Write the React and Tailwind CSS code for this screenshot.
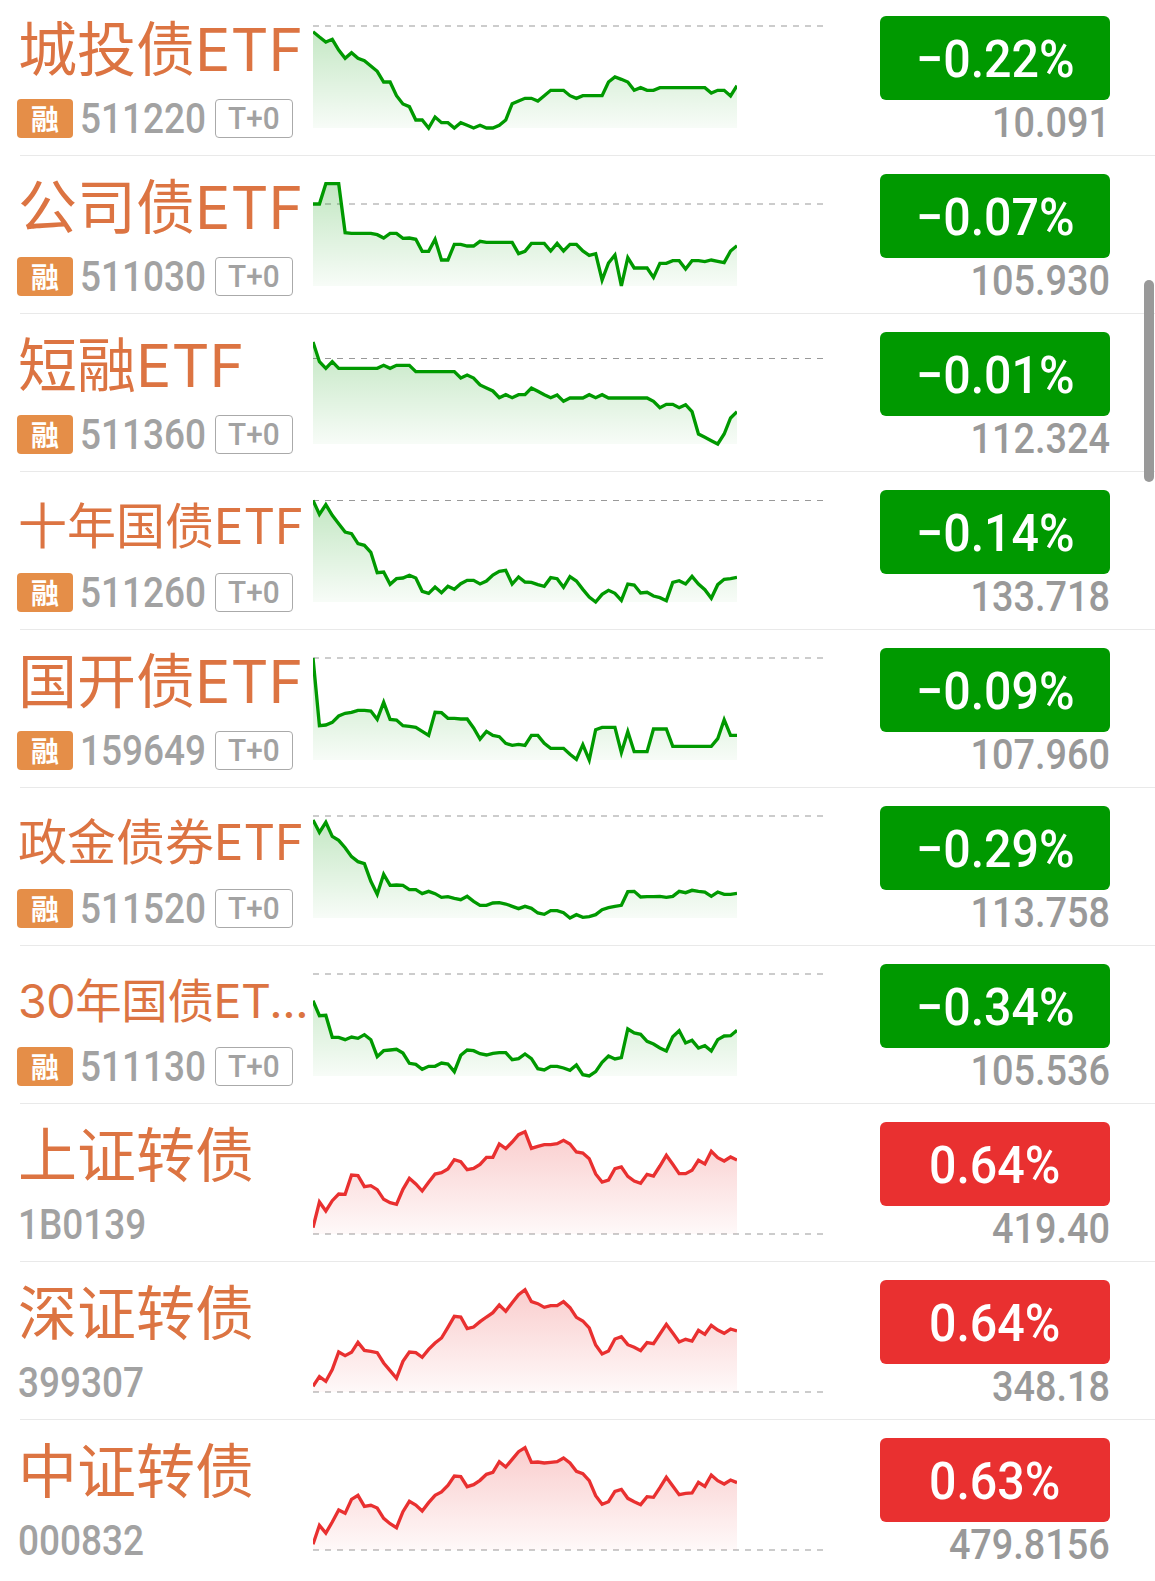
const POINTS = {
  511220: [
    95, 111, 126, 118, 150, 175, 158, 175, 182, 198, 214, 246, 246, 287, 312, 320, 360, 360, 384, 351, 368, 368,
    384, 368, 376, 384, 376, 384, 384, 376, 360, 311, 303, 295, 295, 303, 287, 271, 271, 271, 287, 295, 287, 287,
    287, 287, 246, 231, 238, 246, 271, 263, 271, 271, 263, 263, 263, 263, 263, 263, 263, 263, 279, 271, 271, 288, 257,
  ],
  511030: [
    138, 138, 77, 77, 77, 224, 226, 226, 226, 226, 230, 240, 226, 226, 241, 240, 244, 280, 280, 244, 306, 306,
    259, 259, 264, 264, 250, 253, 253, 253, 253, 253, 287, 280, 256, 256, 256, 279, 256, 279, 259, 259, 279, 292,
    287, 366, 315, 291, 384, 299, 330, 330, 330, 358, 316, 316, 308, 308, 333, 308, 308, 311, 306, 310, 314, 279, 263,
  ],
  511360: [
    78, 137, 157, 137, 157, 157, 157, 157, 157, 157, 157, 148, 157, 148, 148, 148, 167, 167, 167, 167, 167, 167,
    167, 186, 177, 186, 207, 216, 225, 245, 236, 245, 236, 236, 216, 226, 236, 245, 237, 256, 246, 246, 246, 236,
    245, 236, 246, 246, 246, 246, 246, 246, 246, 256, 275, 265, 265, 275, 266, 287, 354, 364, 374, 384, 354, 306, 287,
  ],
  511260: [
    79, 121, 92, 124, 149, 174, 179, 209, 214, 235, 296, 294, 331, 314, 312, 304, 312, 352, 358, 339, 356, 337,
    346, 329, 319, 319, 330, 321, 303, 292, 289, 330, 309, 324, 325, 332, 337, 311, 314, 340, 308, 321, 346, 369,
    384, 361, 349, 358, 379, 330, 333, 357, 355, 366, 371, 380, 325, 320, 330, 307, 330, 347, 373, 332, 316, 314, 310,
  ],
  159649: [
    78, 281, 279, 271, 252, 244, 241, 235, 235, 237, 262, 211, 262, 264, 281, 283, 286, 298, 310, 241, 242, 259,
    259, 261, 261, 288, 321, 298, 310, 314, 334, 340, 337, 340, 310, 310, 334, 349, 349, 349, 367, 382, 338, 384,
    293, 286, 286, 286, 362, 299, 359, 359, 359, 291, 291, 291, 343, 343, 343, 343, 343, 343, 343, 320, 263, 310, 310,
  ],
  511520: [
    90, 127, 97, 139, 151, 173, 200, 215, 221, 274, 313, 253, 286, 285, 286, 299, 299, 311, 304, 311, 322, 320,
    325, 329, 319, 334, 346, 346, 339, 338, 342, 349, 356, 349, 355, 369, 373, 362, 362, 368, 384, 374, 382, 380,
    374, 359, 353, 349, 346, 305, 304, 321, 320, 320, 319, 322, 319, 304, 308, 301, 304, 306, 319, 306, 313, 313, 310,
  ],
  511130: [
    158, 203, 202, 268, 268, 275, 267, 271, 260, 275, 326, 308, 306, 304, 315, 346, 349, 364, 355, 355, 345, 348,
    371, 322, 306, 308, 317, 321, 316, 314, 314, 335, 332, 318, 332, 362, 366, 355, 355, 360, 367, 351, 380, 384,
    371, 343, 324, 333, 329, 243, 255, 259, 280, 288, 300, 309, 266, 248, 285, 277, 300, 293, 309, 275, 264, 263, 247,
  ],
  "1B0139": [
    365, 288, 315, 284, 264, 265, 207, 209, 242, 239, 251, 280, 290, 295, 250, 217, 234, 255, 229, 204, 200, 189,
    161, 167, 191, 187, 175, 154, 154, 114, 128, 108, 86, 77, 127, 121, 116, 116, 113, 103, 114, 138, 141, 158,
    204, 228, 222, 188, 183, 211, 225, 232, 205, 210, 180, 148, 175, 203, 203, 193, 163, 174, 136, 155, 165, 153, 162,
  ],
  399307: [
    367, 338, 352, 317, 264, 275, 265, 235, 259, 262, 266, 297, 320, 343, 292, 264, 266, 280, 256, 237, 222, 190,
    157, 159, 194, 189, 173, 159, 146, 123, 142, 116, 92, 77, 113, 119, 130, 125, 125, 113, 131, 160, 171, 192,
    243, 270, 261, 225, 218, 242, 250, 260, 236, 239, 210, 181, 207, 234, 226, 231, 199, 211, 184, 198, 208, 195, 201,
  ],
  "000832": [
    367, 310, 333, 300, 264, 274, 232, 220, 253, 250, 258, 289, 305, 317, 269, 238, 249, 267, 242, 220, 210, 190,
    162, 164, 194, 188, 175, 157, 151, 119, 135, 112, 89, 77, 121, 120, 123, 121, 119, 108, 123, 148, 155, 176,
    221, 247, 239, 208, 202, 229, 239, 248, 224, 226, 197, 166, 192, 218, 214, 213, 181, 193, 159, 176, 186, 174, 182,
  ],
};

// base = y of the previous close line
const ROWS = [
  { name: "城投债ETF", code: "511220", margin: true, change: "−0.22%", price: "10.091", base: 78 },
  { name: "公司债ETF", code: "511030", margin: true, change: "−0.07%", price: "105.930", base: 138 },
  { name: "短融ETF", code: "511360", margin: true, change: "−0.01%", price: "112.324", base: 127.5 },
  { name: "十年国债ETF", code: "511260", margin: true, change: "−0.14%", price: "133.718", base: 79.5, size: "md" },
  { name: "国开债ETF", code: "159649", margin: true, change: "−0.09%", price: "107.960", base: 78 },
  { name: "政金债券ETF", code: "511520", margin: true, change: "−0.29%", price: "113.758", base: 78, size: "md" },
  { name: "30年国债ET...", code: "511130", margin: true, change: "−0.34%", price: "105.536", base: 78, size: "sm" },
  { name: "上证转债", code: "1B0139", change: "0.64%", price: "419.40", base: 384, up: true },
  { name: "深证转债", code: "399307", change: "0.64%", price: "348.18", base: 384, up: true },
  { name: "中证转债", code: "000832", change: "0.63%", price: "479.8156", base: 384, up: true },
];

const NAME_SIZES = {
  lg: "text-[59px] pt-[3px]",
  md: "text-[49px] pt-[9px]",
  sm: "text-[46.5px] tracking-[-0.4px] pt-[11px]",
};

const CHART_WIDTH = 1272;
const BOTTOM = 384;

function Sparkline({ code, base, up }) {
  const points = POINTS[code];
  const step = CHART_WIDTH / (points.length - 1);
  const line = points.map((y, i) => `${(i * step).toFixed(1)},${y}`).join(" ");
  const color = up ? "#e93030" : "#009900";
  const id = `fill-${code}`;

  return (
    <svg className="w-[510px] h-[158px] shrink-0" viewBox="0 -6 1530 474">
      <defs>
        <linearGradient id={id} gradientUnits="userSpaceOnUse" x1="0" y1="77" x2="0" y2={BOTTOM}>
          <stop offset="0" stopColor={color} stopOpacity="0.24" />
          <stop offset="1" stopColor={color} stopOpacity="0.03" />
        </linearGradient>
      </defs>
      <line x1="0" x2="1530" y1={base} y2={base} stroke="#999999" strokeWidth="3" strokeDasharray="18 18" />
      <polygon points={`0,${BOTTOM} ${line} ${CHART_WIDTH},${BOTTOM}`} fill={`url(#${id})`} />
      <svg x="0" y="0" width={CHART_WIDTH} height="474">
        <polyline points={line} fill="none" stroke={color} strokeWidth="10" />
      </svg>
    </svg>
  );
}

function Row({ name, code, margin, change, price, base, up, size = "lg" }) {
  return (
    <div className="ml-5 h-[158px] flex border-b border-[#e9e9e9] last:border-b-0">
      <div className="w-[293px] shrink-0 whitespace-nowrap">
        <div
          className={`-ml-[2px] h-[101px] flex items-center text-[#dc7442] font-['Inter','Noto_Sans_CJK_SC',sans-serif] ${NAME_SIZES[size]}`}
        >
          {name}
        </div>
        <div className="-ml-[3px] h-[39px] flex items-center">
          {margin && (
            <span className="mr-[7px] pb-0.5 w-14 h-[39px] shrink-0 rounded-[4px] bg-[#e58e48] text-white text-[28px] leading-none font-bold flex items-center justify-center font-['Noto_Sans_CJK_SC',sans-serif]">
              融
            </span>
          )}
          <span className={`w-[135px] shrink-0 ${margin ? "" : "ml-px"}`}>
            <span className="inline-block origin-left scale-x-[0.88] text-[42px] leading-[39px] font-medium text-[#a2a2a2] font-['Roboto',sans-serif]">
              {code}
            </span>
          </span>
          {margin && (
            <span className="w-[78px] h-[39px] shrink-0 rounded-[4px] border border-[#aaaaaa] text-[#a2a2a2] text-[31px] leading-none font-medium flex items-center justify-center font-['Roboto',sans-serif]">
              <span className="scale-x-[0.96]">T+0</span>
            </span>
          )}
        </div>
      </div>
      <Sparkline code={code} base={base} up={up} />
      <div className="ml-[57px] mt-[18px] w-[230px] shrink-0 font-['Roboto',sans-serif] font-medium">
        <div
          className={`h-[84px] pt-1 rounded-[6px] text-white text-[52px] flex items-center justify-center ${
            up ? "bg-[#e93030]" : "bg-[#009900]"
          }`}
        >
          <span className="scale-x-[0.93]">{change}</span>
        </div>
        <div className="text-right text-[42px] leading-[46px] text-[#999999]">
          <span className="inline-block origin-right scale-x-[0.9]">{price}</span>
        </div>
      </div>
    </div>
  );
}

export default function App() {
  return (
    <div className="relative w-[1155px] h-[1581px] bg-white overflow-hidden">
      <div className="-mt-[2px]">
        {ROWS.map((row) => (
          <Row key={row.code} {...row} />
        ))}
      </div>
      <div className="absolute right-px top-[280px] w-[10px] h-[202px] rounded-full bg-[#999999]" />
    </div>
  );
}
